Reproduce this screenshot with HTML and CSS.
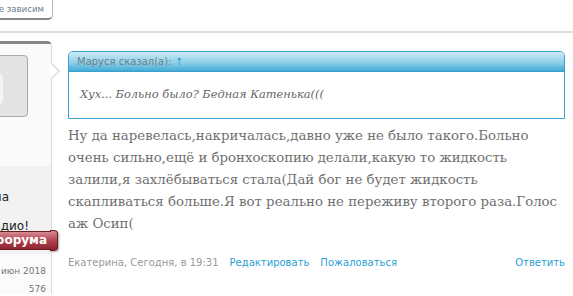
FILE: index.html
```html
<!DOCTYPE html>
<html lang="ru">
<head>
  <meta charset="UTF-8" />
  <title>Форум</title>
  <link rel="stylesheet" href="styles.css">
</head>
<body>

  <div class="topbar">
    <a class="tab-btn" href="#"><span class="cut">Не зависим</span></a>
  </div>

  <div class="post">
    <!-- user column, mostly cut off on the left -->
    <div class="author">
      <div class="author-inner">
        <div class="author-card">
          <div class="avatar">
            <div class="avatar-shape"></div>
          </div>
        </div>
        <div class="cut author-name">Екатерина</div>
        <div class="cut author-status">Привет Радио!</div>
        <div class="author-rank"><span class="cut">Участник форума</span></div>
        <div class="author-info">
          <div class="cut info-row">Регистрация: <span class="link">16</span> июн 2018</div>
          <div class="cut info-row">576</div>
        </div>
      </div>
      <div class="author-arrow"></div>
    </div>

    <div class="post-body">
      <div class="quote">
        <div class="quote-head">Маруся сказал(а): <span class="link">↑</span></div>
        <div class="quote-text">Хух... Больно было? Бедная Катенька(((</div>
      </div>

      <div class="message">
        Ну да наревелась,накричалась,давно уже не было такого.Больно очень сильно,ещё и бронхоскопию делали,какую то жидкость залили,я захлёбываться стала(Дай бог не будет жидкость скапливаться больше.Я вот реально не переживу второго раза.Голос аж Осип(
      </div>

      <div class="post-footer">
        <span class="meta">Екатерина, Сегодня, в 19:31</span>
        <a class="action" href="#">Редактировать</a>
        <a class="action" href="#">Пожаловаться</a>
        <a class="action reply" href="#">Ответить</a>
      </div>
    </div>
  </div>

</body>
</html>
```

FILE: styles.css
```css
* {
  box-sizing: border-box;
  margin: 0;
  padding: 0;
}

body {
  font-family: Tahoma, "DejaVu Sans", Verdana, sans-serif;
  font-size: 10px;
  color: #333;
  background: #ffffff;
  overflow: hidden;
}

a {
  text-decoration: none;
}

.link {
  color: #2a9fd6;
}

/* lines whose start is hidden past the left edge */
.cut {
  display: block;
  width: 200px;
  margin-left: -148px;
  white-space: nowrap;
  text-align: right;
}

/* top tab button */
.topbar {
  height: 33px;
  border-bottom: 2px solid #dddddd;
  overflow: hidden;
}

.tab-btn {
  display: block;
  width: 53px;
  height: 22px;
  margin-top: -2px;
  padding-top: 2px;
  line-height: 17px;
  font-size: 8.6px;
  color: #6d7e8e;
  overflow: hidden;
  border: 1px solid #bcbcbc;
  border-left: none;
  border-bottom: 2px solid #8a8a8a;
  border-radius: 0 0 5px 0;
  background: #ffffff;
}

.tab-btn .cut {
  padding-right: 8px;
}

/* post row */
.post {
  display: flex;
  margin-top: 8px;
}

.author {
  position: relative;
  width: 52px;
  flex-shrink: 0;
  height: 253px;
  border-right: 1px solid #dcdcdc;
  border-top: 3px solid #858585;
  border-top-right-radius: 5px;
  background: #f2f2f2;
}

.author-inner {
  width: 51px;
  height: 100%;
  overflow: hidden;
}

.author-card {
  height: 122px;
  background: #fafafa;
  border-bottom-right-radius: 5px;
  padding-top: 11px;
}

.avatar {
  position: relative;
  width: 30px;
  height: 62px;
  margin-left: -2px;
  background: #e3e3e3;
  border: 1px solid #a9a9a9;
  border-radius: 0 4px 4px 0;
  overflow: hidden;
}

.avatar-shape {
  position: absolute;
  left: -10px;
  top: 16px;
  width: 14px;
  height: 34px;
  background: #f4f4f4;
  border-radius: 0 7px 7px 0;
}

.author-name,
.author-status {
  font-size: 12px;
  line-height: 14px;
  color: #222;
}

.author-name {
  margin-top: 24px;
  padding-right: 43px;
}

.author-status {
  margin-top: 15px;
  padding-right: 23px;
}

.author-rank {
  position: relative;
  width: 51px;
  height: 19px;
  margin-top: -2px;
  line-height: 17px;
  font-size: 12px;
  font-weight: bold;
  color: #ffffff;
  overflow: hidden;
  background: linear-gradient(to bottom, #d68a92, #b04450 50%, #8e2430);
  border-top: 1px solid #6e1a22;
  border-bottom: 1px solid #6e1a22;
  z-index: 2;
}

.author-rank .cut {
  padding-right: 5px;
}

.author-info {
  margin-top: 4px;
  height: 40px;
  background: #fbfbfb;
  border-top-right-radius: 5px;
  padding-top: 8px;
  font-size: 9px;
  color: #777;
}

.info-row {
  padding-right: 6px;
  line-height: 18px;
}

.author-arrow {
  position: absolute;
  right: -9px;
  top: 18px;
  width: 0;
  height: 0;
  border-top: 9px solid transparent;
  border-bottom: 9px solid transparent;
  border-left: 9px solid #dcdcdc;
}

.author-arrow::after {
  content: "";
  position: absolute;
  left: -10px;
  top: -8px;
  border-top: 8px solid transparent;
  border-bottom: 8px solid transparent;
  border-left: 8px solid #ffffff;
}

/* rank badge end, drawn over the column border */
.author::after {
  content: "";
  position: absolute;
  left: 50px;
  top: 186px;
  width: 7px;
  height: 19px;
  background: linear-gradient(to bottom, #d68a92, #b04450 50%, #8e2430);
  border: 1px solid #6e1a22;
  border-left: none;
  border-radius: 0 4px 4px 0;
  box-shadow: 1px 1px 2px rgba(0, 0, 0, 0.35);
}

/* main part */
.post-body {
  flex: 1;
  padding: 10px 8px 0 16px;
}

.quote {
  border: 1px solid #3a9fcb;
  border-radius: 5px 5px 0 0;
}

.quote-head {
  height: 20px;
  line-height: 19px;
  padding-left: 8px;
  font-size: 10px;
  color: #6f7f8a;
  background: linear-gradient(to bottom, #cdeaf5, #8fd0e8 55%, #43acd6);
  border-bottom: 1px solid #3a9fcb;
  border-radius: 4px 4px 0 0;
}

.quote-text {
  padding: 13px 11px 15px;
  font-family: "DejaVu Serif", Georgia, serif;
  font-style: italic;
  font-size: 11.4px;
  line-height: 18px;
  color: #666;
}

.message {
  margin-top: 6px;
  font-family: "DejaVu Serif", Georgia, serif;
  font-size: 13.3px;
  line-height: 22px;
  color: #707070;
}

.post-footer {
  display: flex;
  gap: 11px;
  margin-top: 21px;
  line-height: 14px;
  font-size: 10px;
}

.meta {
  color: #999;
}

.action {
  color: #2a9fd6;
}

.reply {
  margin-left: auto;
}
```
